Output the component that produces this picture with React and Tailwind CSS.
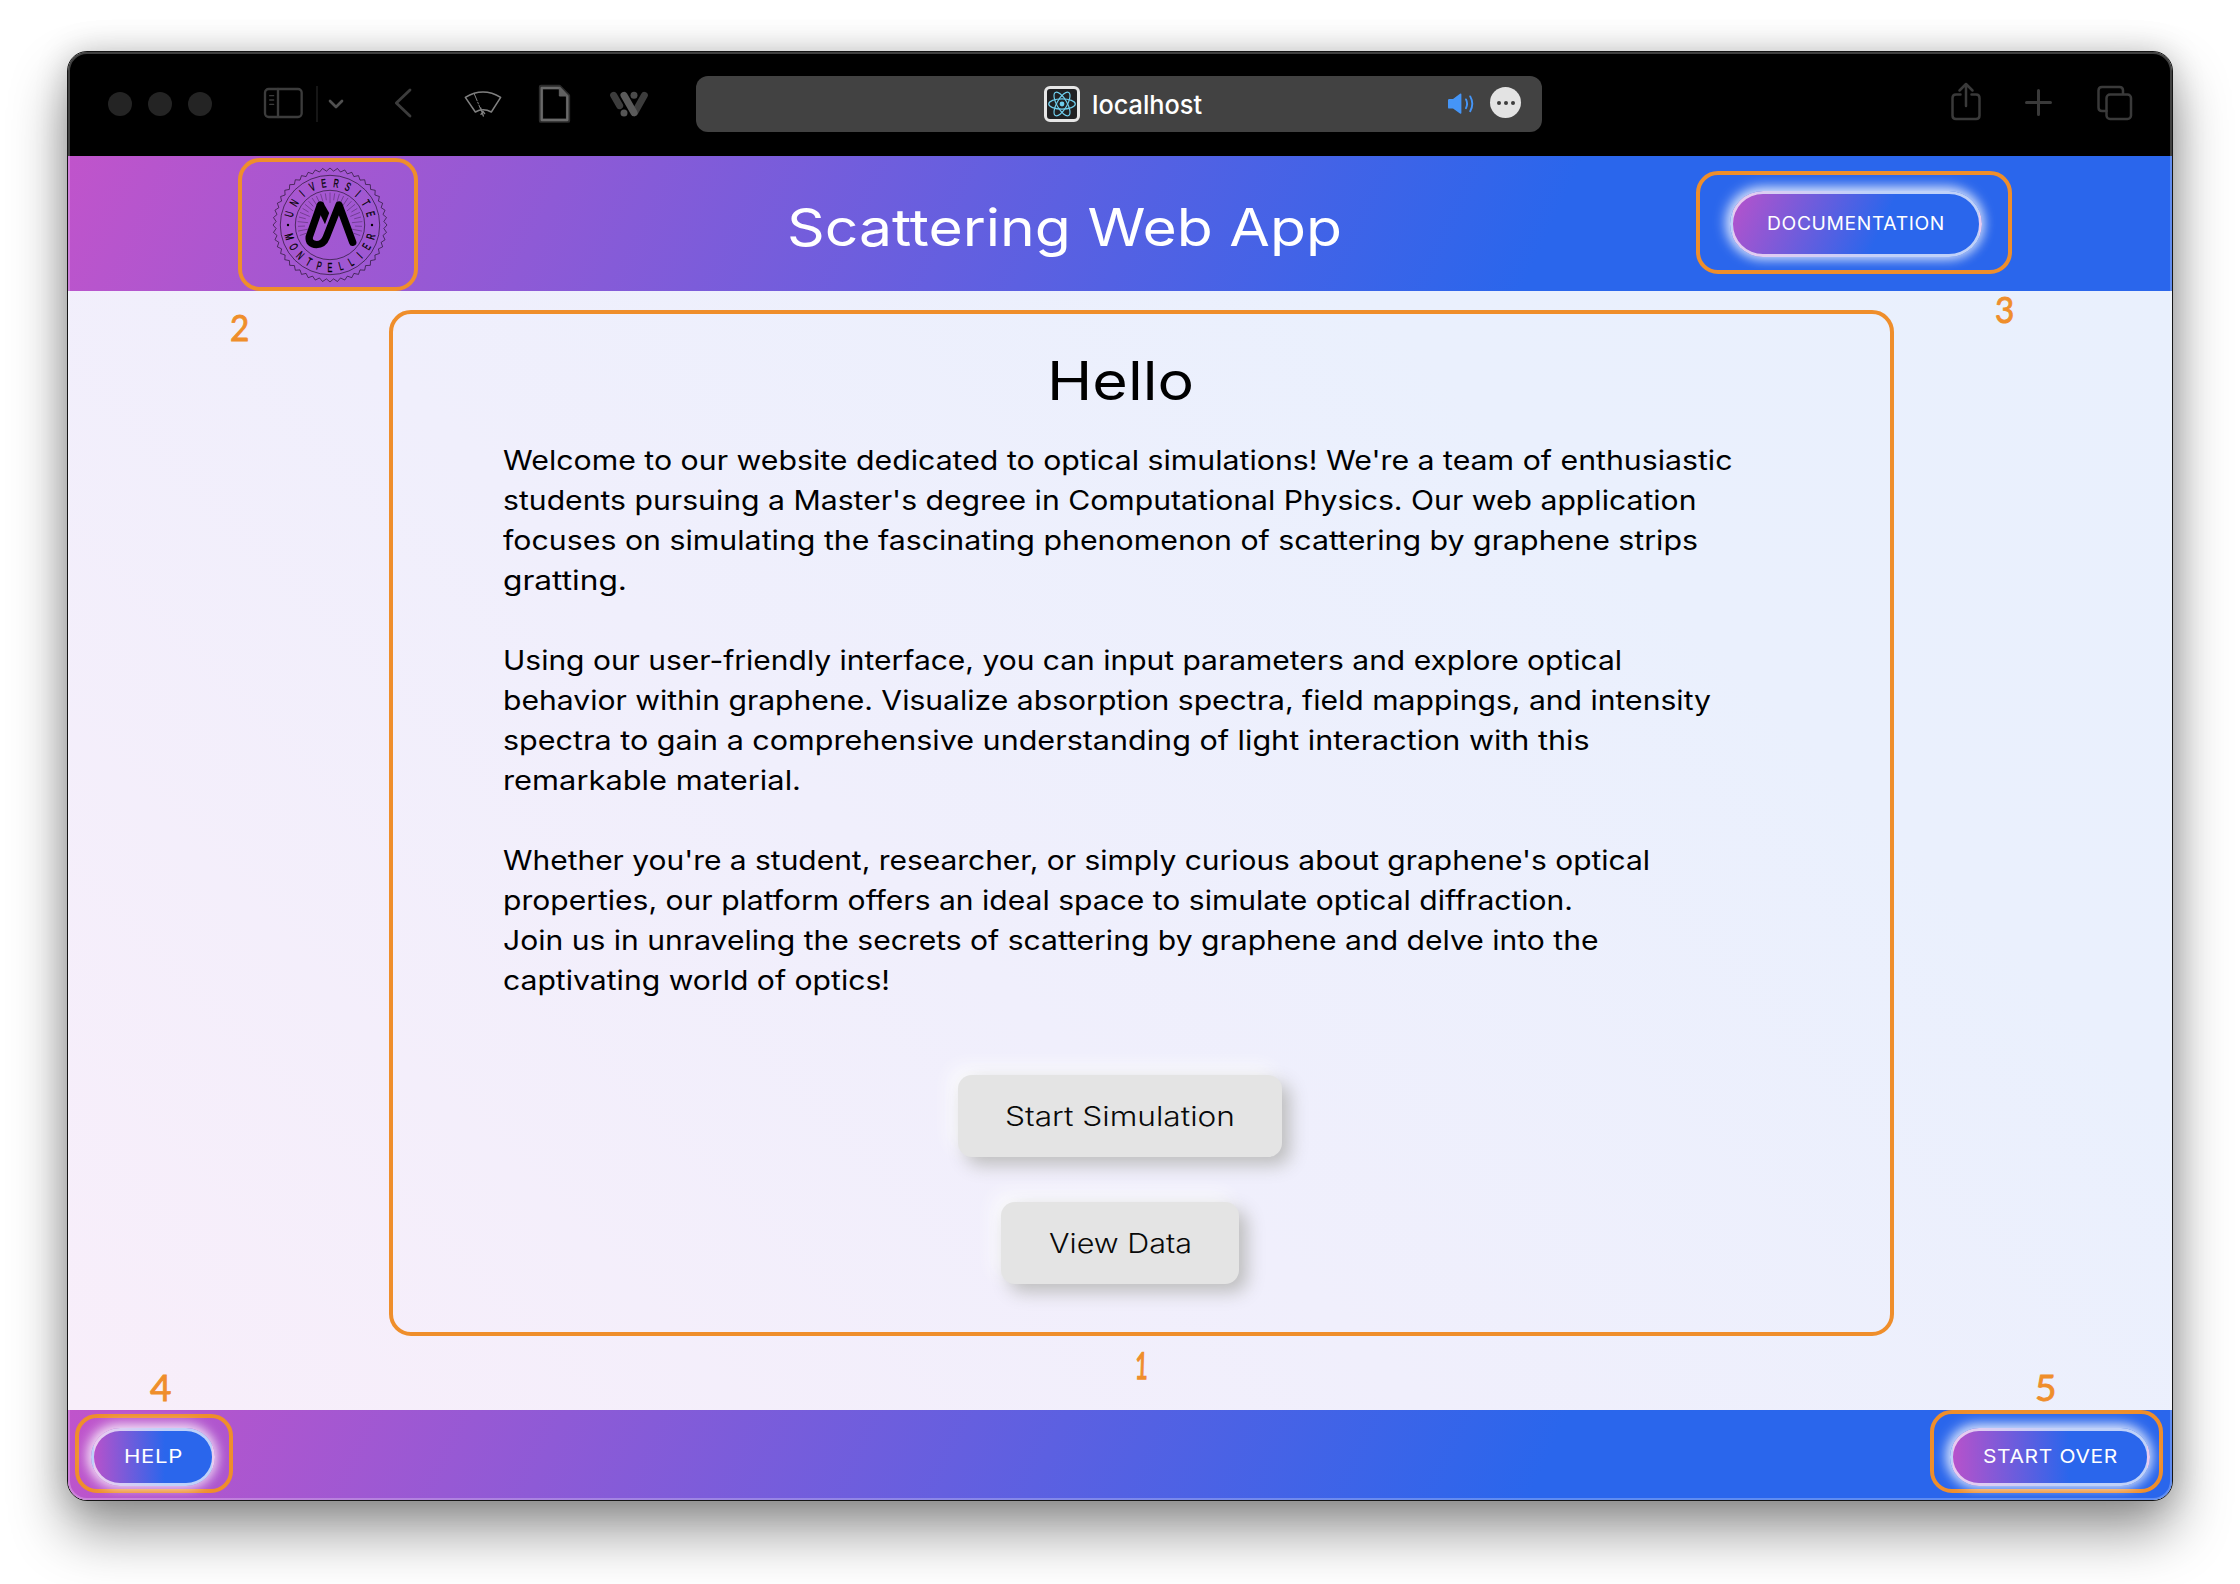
import React, { useLayoutEffect, useRef, useState } from "react";

// A single line of text whose glyphs are stretched to a fixed advance width.
function FitLine({ text, width, className = "" }) {
  const ref = useRef(null);
  const [scale, setScale] = useState(1);
  useLayoutEffect(() => {
    if (ref.current && ref.current.offsetWidth) setScale(width / ref.current.getBoundingClientRect().width);
  }, [width]);
  return (
    <span className={"block text-left whitespace-nowrap " + className} style={{ width }}>
      <span ref={ref} className="inline-block origin-left" style={{ transform: `scaleX(${scale})` }}>
        {text}
      </span>
    </span>
  );
}

function ToolIcon({ x, w, children, className = "" }) {
  return (
    <svg className={"h-10 shrink-0 " + className} width={w / 3} viewBox={`${x} 42 ${w} 120`} fill="none" strokeLinecap="round" strokeLinejoin="round">
      {children}
    </svg>
  );
}

function ReactMark() {
  return (
    <svg className="h-[30px] w-[30px]" viewBox="-15 -15 30 30" fill="none" stroke="#6fcdec" strokeWidth="1.2">
      <circle r="2.4" fill="#6fcdec" stroke="none" />
      {[0, 60, 120].map((a) => (
        <ellipse key={a} rx="13.3" ry="5.1" transform={`rotate(${a})`} />
      ))}
    </svg>
  );
}

function Chrome() {
  return (
    <div className="flex h-[104px] shrink-0 items-center bg-black">
      <div className="ml-10 flex gap-4">
        <span className="size-6 rounded-full bg-[#242424]" />
        <span className="size-6 rounded-full bg-[#242424]" />
        <span className="size-6 rounded-full bg-[#242424]" />
      </div>
      <ToolIcon x={9} w={123} className="ml-[51px]">
        <g stroke="#3c3c3c" strokeWidth="7">
          <rect x="15" y="57" width="110" height="84" rx="11" />
          <path d="M54 57V141" />
        </g>
        <path d="M29 77h12M29 90h12M29 103h12" stroke="#3c3c3c" strokeWidth="4" />
      </ToolIcon>
      <span className="ml-3 h-9 w-0.5 bg-[#161616]" />
      <ToolIcon x={204} w={48} className="ml-2.5">
        <path d="M210 93l18 18 18-18" stroke="#505050" strokeWidth="8" />
      </ToolIcon>
      <ToolIcon x={402} w={57} className="ml-[50px]">
        <path d="M450 60L409 99l41 39" stroke="#3c3c3c" strokeWidth="8.500" />
      </ToolIcon>
      <ToolIcon x={609} w={120} className="ml-[50px]">
        <g stroke="#808080" strokeWidth="4.500">
          <path d="M616 82Q669 50 722 82L694 126Q669 112 646 126Z" />
          <path d="M643 72L662 118" strokeWidth="3" strokeDasharray="22 5 4 5" />
          <path d="M662 114L670 138M663 133l6-9 5 7" strokeWidth="4" />
        </g>
      </ToolIcon>
      <ToolIcon x={834} w={99} className="ml-[35px]">
        <path d="M843 51H898L924 77V152H843Z" stroke="#2c2c2c" strokeWidth="13" />
        <path d="M845 54H899L922 78V150H845Z" stroke="#6a6a6a" strokeWidth="7" />
        <path d="M898 54V78H922Z" fill="#606060" stroke="#606060" strokeWidth="3" />
      </ToolIcon>
      <ToolIcon x={1047} w={120} className="ml-[38px]">
        <g strokeWidth="21">
          <path d="M1061 76L1079 107M1153 76L1124 128" stroke="#3c3c3c" />
          <path d="M1092 76L1122 128" stroke="#5a5a5a" />
        </g>
        <circle cx="1122" cy="76" r="10.5" fill="#4a4a4a" />
        <circle cx="1092" cy="129" r="10.5" fill="#555" />
      </ToolIcon>

      <div className="ml-[47px] flex h-14 w-[846px] items-center rounded-xl bg-[#424242]">
        <span className="ml-[348px] flex size-9 items-center justify-center rounded-md border-3 border-[#e6e6e6] bg-[#202123]">
          <ReactMark />
        </span>
        <FitLine text="localhost" width={110} className="ml-3 pt-0.5 text-[26px] leading-9 font-medium text-white" />
        <svg className="ml-[245px] h-[22px] w-7" viewBox="0 0 28 22" fill="none" stroke="#4595f7" strokeWidth="1.9" strokeLinecap="round">
          <path d="M1 7.2Q1 6 2.2 6H6L13 0.8Q14.4 0 14.4 1.6V19.8Q14.4 21.4 13 20.6L6 15.6H2.2Q1 15.6 1 14.4Z" fill="#4595f7" stroke="none" />
          <path d="M19 6.4Q21.2 10.8 19 15.2M23.2 3.4Q27.4 10.8 23.2 18.2" />
        </svg>
        <span className="mb-[3px] ml-[15px] flex h-[31px] w-[31px] items-center justify-center gap-[3px] rounded-full bg-[#e3e3e3]">
          <i className="size-1 rounded-full bg-[#3d3d3d]" />
          <i className="size-1 rounded-full bg-[#3d3d3d]" />
          <i className="size-1 rounded-full bg-[#3d3d3d]" />
        </span>
      </div>

      <svg className="ml-[405px] h-12 w-[38px]" viewBox="1948 80 38 48" fill="none" stroke="#3a3a3a" strokeWidth="2.5" strokeLinecap="round" strokeLinejoin="round">
        <path d="M1961.5 94.5H1957Q1953.5 94.5 1953.5 98V115.500Q1953.500 119 1957 119H1977Q1980.500 119 1980.500 115.500V98Q1980.500 94.500 1977 94.500H1972.500" />
        <path d="M1967 106V84.500M1960.500 90.500L1967 84L1973.500 90.500" />
      </svg>
      <svg className="ml-9 h-12 w-[34px]" viewBox="2022 80 34 48" fill="none" stroke="#3a3a3a" strokeWidth="3" strokeLinecap="round">
        <path d="M2027.500 102.500H2051.500M2039.500 90.500V114.500" />
      </svg>
      <svg className="ml-[38px] h-12 w-[42px]" viewBox="2094 80 42 48" fill="none" stroke="#3a3a3a" strokeWidth="2.500" strokeLinecap="round" strokeLinejoin="round">
        <rect x="2107.500" y="94.500" width="24.500" height="24.500" rx="3.500" />
        <path d="M2107.500 111H2103Q2099.500 111 2099.500 107.500V90.500Q2099.500 87 2103 87H2120.500Q2124 87 2124 90.500V94" />
      </svg>
    </div>
  );
}

function sealOutline(teeth, outer, inner) {
  const pts = [];
  for (let i = 0; i < teeth * 2; i++) {
    const a = (Math.PI * i) / teeth;
    const r = i % 2 ? inner : outer;
    pts.push(`${(r * Math.sin(a)).toFixed(2)},${(-r * Math.cos(a)).toFixed(2)}`);
  }
  return pts.join(" ");
}

function UniversityLogo() {
  const top = "UNIVERSITE".split("");
  const bottom = "MONTPELLIER".split("");
  return (
    <svg className="ml-1 h-[116px] w-[116px]" viewBox="-58 -58 116 116" fill="none">
      <g stroke="#000" strokeOpacity="0.68" strokeWidth="0.8">
        <polygon points={sealOutline(48, 57, 54)} />
        <circle r="49.7" />
        <circle r="34.7" />
      </g>
      <g stroke="#000" strokeOpacity="0.45" strokeWidth="0.6">
        {Array.from({ length: 27 }, (_, i) => (
          <path key={i} d={i % 2 ? "M0 -32.500V-22" : "M0 -32V-25"} transform={`rotate(${(i - 13) * 8.4})`} />
        ))}
      </g>
      <g fill="#000" stroke="#000" strokeWidth="0.300" fontFamily="Liberation Sans" fontSize="12" textAnchor="middle">
        {top.map((c, i) => (
          <text key={i} transform={`rotate(${-75 + i * 16.667}) translate(0 -38) scale(0.6 1)`}>{c}</text>
        ))}
        {bottom.map((c, i) => (
          <text key={i} transform={`rotate(${74 - i * 14.8}) translate(0 46.500) scale(0.6 1)`}>{c}</text>
        ))}
      </g>
      <circle cx="-42" r="1.200" fill="#000" />
      <circle cx="42" r="1.200" fill="#000" />
      <path d="M22.700 17.300L9 -20L-3.600 12Q-6.500 19.600 -13.500 19.600Q-21.500 19 -20.800 12L-9.600 -20" stroke="#000" strokeWidth="7.400" strokeLinecap="round" strokeLinejoin="round" />
      <path d="M-6.300 -21.500L-0.800 -12L-5 -0.800L-10 -11Z" fill="#000" />
    </svg>
  );
}

const frame = "flex items-center justify-center border-4 border-[#ef8e2b] ";

function PillButton({ children, className }) {
  return (
    <button
      className={
        "flex items-center justify-center rounded-full border-3 border-white/70 text-white shadow-[-2px_-2px_13px_2px_rgba(255,255,255,0.75),1px_1px_11px_1px_rgba(255,255,255,0.45)] " +
        className
      }
    >
      {children}
    </button>
  );
}

function SoftButton({ text, textWidth, className }) {
  return (
    <button className={"flex h-[82px] items-center justify-center rounded-[14px] bg-[#e4e4e4] pt-0.5 text-[27px] font-light text-[#090909] shadow-[8px_8px_18px_#bdbdbd,-8px_-8px_18px_#fbfbfd] " + className}>
      <FitLine text={text} width={textWidth} />
    </button>
  );
}

function Marker({ n, className }) {
  return (
    <span className={"absolute font-[Lato] text-[37px] leading-none font-normal text-[#ef8e2b] [-webkit-text-stroke:0.9px_#ef8e2b] " + className}>{n}</span>
  );
}

const paragraphs = [
  [
    ["Welcome to our website dedicated to optical simulations! We're a team of enthusiastic", 1229.5],
    ["students pursuing a Master's degree in Computational Physics. Our web application", 1193.5],
    ["focuses on simulating the fascinating phenomenon of scattering by graphene strips", 1195],
    ["gratting.", 124],
  ],
  [
    ["Using our user-friendly interface, you can input parameters and explore optical", 1119],
    ["behavior within graphene. Visualize absorption spectra, field mappings, and intensity", 1208],
    ["spectra to gain a comprehensive understanding of light interaction with this", 1086.5],
    ["remarkable material.", 298],
  ],
  [
    ["Whether you're a student, researcher, or simply curious about graphene's optical", 1147],
    ["properties, our platform offers an ideal space to simulate optical diffraction.", 1070],
    ["Join us in unraveling the secrets of scattering by graphene and delve into the", 1095.5],
    ["captivating world of optics!", 387],
  ],
];

export default function App() {
  return (
    <div className="flex h-[1584px] w-[2240px] overflow-hidden bg-white font-['Inter',sans-serif]">
      <div className="relative mt-[51px] ml-[67px] flex h-[1450px] w-[2106px] flex-col overflow-hidden rounded-[20px] border border-[#151515] bg-white shadow-[0_30px_56px_rgba(0,0,0,0.42),0_0_32px_rgba(0,0,0,0.18)]">
        <Chrome />

        <header className="flex h-[135px] shrink-0 items-start bg-[linear-gradient(115deg,#c054cb_0%,#2a66ec_70%)]">
          <div className={frame + "mt-0.5 ml-[170px] h-[133px] w-[180px] rounded-[22px]"}>
            <UniversityLogo />
          </div>
          <h1 className="mt-[37px] ml-[369px] text-[52px] leading-[70px] font-normal text-white">
            <FitLine text="Scattering Web App" width={555} />
          </h1>
          <div className={frame + "mt-[15px] ml-[354px] h-[103px] w-[316px] rounded-[22px] pt-[3px] pl-1"}>
            <PillButton className="h-[66px] w-[252px] bg-[linear-gradient(115deg,#b752cb_0%,#2a66ec_60%)] text-[18.500px] tracking-[0.6px]">
              <FitLine text="DOCUMENTATION" width={178} />
            </PillButton>
          </div>
        </header>

        <main className="relative h-[1119px] shrink-0 bg-[linear-gradient(45deg,#f8eefa_0%,#f0effc_42%,#eaf0fd_75%,#e9f0fd_100%)]">
          <div className="flex pt-[19px] pl-[321px]">
            <section className="flex h-[1026px] w-[1505px] flex-col items-center rounded-[22px] border-4 border-[#ef8e2b] pr-[43px]">
              <h2 className="mt-[35px] text-[53px] leading-16 font-normal text-black">
                <FitLine text="Hello" width={147} />
              </h2>
              <div className="mt-7 flex flex-col gap-10 self-start pl-[110px] text-[27px] leading-10 text-black">
                {paragraphs.map((lines, i) => (
                  <p key={i}>
                    {lines.map(([text, width]) => (
                      <FitLine key={text} text={text} width={width} />
                    ))}
                  </p>
                ))}
              </div>
              <SoftButton text="Start Simulation" textWidth={230} className="mt-[74px] w-[324px]" />
              <SoftButton text="View Data" textWidth={143} className="mt-[45px] w-[238px]" />
            </section>
          </div>
          <Marker n="2" className="top-[17px] left-[161px] scale-x-90" />
          <Marker n="3" className="-top-px left-[1926px] scale-x-90" />
          <Marker n="1" className="top-[1055px] left-[1063px] scale-x-60 -skew-x-3 font-['DejaVu_Sans'] [-webkit-text-stroke:1.5px_#ef8e2b]" />
          <Marker n="4" className="top-[1077px] left-[82px]" />
          <Marker n="5" className="top-[1077px] left-[1967px]" />
        </main>

        <footer className="flex grow items-start justify-between bg-[linear-gradient(115deg,#c054cb_0%,#2a66ec_70%)]">
          <div className={frame + "mt-1 ml-[7px] h-[79px] w-[158px] rounded-[22px] pt-[7px] pr-[2px]"}>
            <PillButton className="h-[58px] w-[124px] bg-[linear-gradient(90deg,#b752cb_0%,#2a66ec_60%)] text-[19px] tracking-[0.6px]">
              <FitLine text="HELP" width={59} />
            </PillButton>
          </div>
          <div className={frame + "mr-[9px] h-[83px] w-[233px] rounded-[22px] pt-[11px] pl-[7px]"}>
            <PillButton className="h-[58px] w-[200px] bg-[linear-gradient(90deg,#b752cb_0%,#2a66ec_60%)] text-[19px] tracking-[0.6px]">
              <FitLine text="START OVER" width={135} />
            </PillButton>
          </div>
        </footer>

        <div className="pointer-events-none absolute inset-0 rounded-[19px] border-2 border-white/25" />
      </div>
    </div>
  );
}
